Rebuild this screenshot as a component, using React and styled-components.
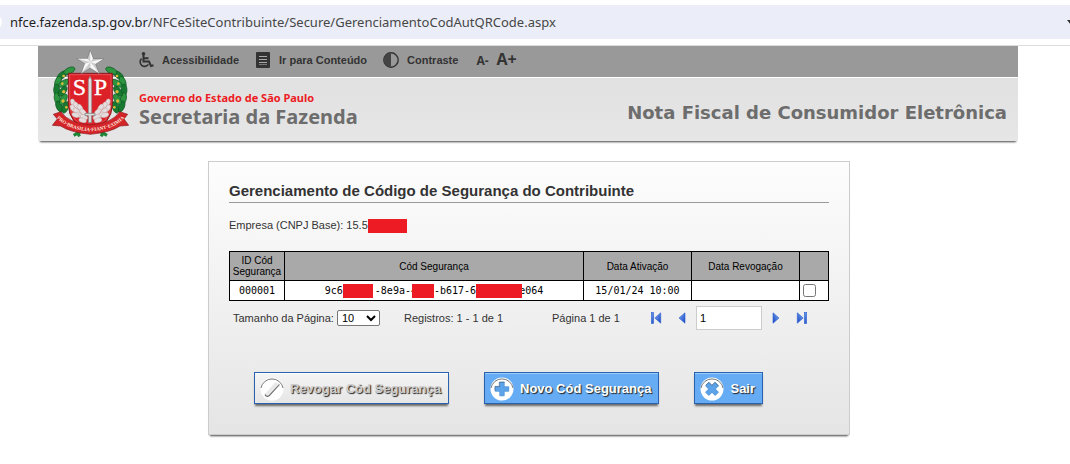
import React from "react";
import styled, { createGlobalStyle } from "styled-components";

const GlobalStyle = createGlobalStyle`
  * { box-sizing: border-box; }
  body {
    margin: 0;
    background: #fff;
    color: #333;
    font-family: "Liberation Sans", Arial, sans-serif;
    font-size: 11px;
    line-height: 16px;
  }
  button, input, select { font-family: inherit; }
`;

const AddressStrip = styled.div`
  padding: 5px 0 6px;
  border-bottom: 1px solid #dcdcdc;
`;

const AddressBar = styled.div`
  display: flex;
  align-items: center;
  height: 34px;
  overflow: hidden;
  background: #ebeef8;
`;

const SiteBadge = styled.span`
  flex: none;
  width: 16px;
  height: 16px;
  margin-left: -14px;
  margin-right: 8px;
  border-radius: 50%;
  background: #fff;
`;

const Address = styled.span`
  flex: 1;
  color: #474747;
  font-family: "Noto Sans", "Open Sans", sans-serif;
  font-size: 13px;
  white-space: nowrap;
`;

const Host = styled.span`
  color: #1f1f1f;
`;

const BarCaret = styled.svg`
  flex: none;
  width: 8px;
  height: 5px;
  margin-right: -5px;
`;

const Page = styled.div`
  padding-right: 14px;
`;

const Header = styled.header`
  display: grid;
  grid-template-columns: 101px 1fr;
  max-width: 980px;
  margin: 0 auto;
  box-shadow: 0 3px 2px -2px #444;
`;

const Emblem = styled.svg`
  grid-area: 1 / 1 / 3 / 2;
  z-index: 1;
  width: 77px;
  height: 87px;
  margin: 4px 0 0 14px;
`;

const AccessNav = styled.nav`
  grid-area: 1 / 1 / 2 / 3;
  display: flex;
  align-items: center;
  gap: 16px;
  height: 32px;
  padding: 0 0 4px 100px;
  background: #999;
  border-bottom: 1px solid #fff;
`;

const AccessLink = styled.a`
  display: flex;
  align-items: center;
  gap: 8px;
  color: #333;
  font-weight: bold;
  text-decoration: none;
  white-space: nowrap;
  svg { width: 16px; height: 16px; }
`;

const SizeButtons = styled.span`
  display: flex;
  align-items: baseline;
  gap: 8px;
  padding-left: 2px;
`;

const SizeButton = styled.button`
  padding: 0;
  border: 0;
  background: none;
  color: #333;
  font-family: "Open Sans", sans-serif;
  font-weight: bold;
  font-size: ${(p) => (p.$large ? 16 : 12)}px;
  line-height: 18px;
`;

const Brand = styled.div`
  grid-area: 2 / 1 / 3 / 3;
  display: flex;
  align-items: center;
  justify-content: space-between;
  height: 63px;
  padding: 0 11px 0 101px;
  background: linear-gradient(#e1e1e1, #e6e6e6);
`;

const Agency = styled.div`
  font-family: "Noto Sans", "Open Sans", sans-serif;
  font-weight: bold;
  white-space: nowrap;
`;

const Government = styled.div`
  color: #ed1c24;
  font-size: 11px;
  line-height: 14px;
`;

const Department = styled.div`
  color: #6d6d6d;
  font-size: 20px;
  line-height: 24px;
`;

const SystemName = styled.h1`
  margin: 6px 0 0;
  color: #6d6d6d;
  font-family: "DejaVu Sans", Verdana, sans-serif;
  font-size: 18px;
  line-height: 24px;
  white-space: nowrap;
`;

const Content = styled.main`
  padding: 20px 0 28px 2px;
`;

const Card = styled.section`
  max-width: 642px;
  margin: 0 auto;
  padding: 20px 20px 30px;
  border: 1px solid #ccc;
  background: linear-gradient(#fdfdfd, #e5e5e5);
  box-shadow: 0 3px 2px -2px #444;
`;

const CardTitle = styled.h2`
  margin: 0 0 14px;
  padding-bottom: 2px;
  border-bottom: 1px solid #999;
  font-size: 15px;
  line-height: 18px;
`;

const Company = styled.p`
  margin: 0 0 18px;
  line-height: 16px;
`;

const Redaction = styled.span`
  display: inline-block;
  position: relative;
  width: ${(p) => p.$width}px;
  height: 14px;
  margin: 0 ${(p) => p.$end || 0}px 0 ${(p) => p.$start || 0}px;
  background: #ed1c24;
  vertical-align: middle;
`;

const CodeTable = styled.table`
  width: 100%;
  border-collapse: collapse;
  table-layout: fixed;
  color: #000;
`;

const Column = styled.col`
  width: ${(p) => p.$width};
`;

const HeadCell = styled.th`
  height: 29px;
  padding: 0;
  border: 1px solid #000;
  background: #a9a9a9;
  font-size: 10px;
  font-weight: normal;
  line-height: 11px;
`;

const Cell = styled.td`
  height: 20px;
  padding: 0;
  border: 1px solid #000;
  background: #fff;
  font-family: "DejaVu Sans Mono", monospace;
  font-size: 10px;
  line-height: 16px;
  text-align: center;
  white-space: nowrap;
`;

const RowCheck = styled.input`
  display: block;
  width: 13px;
  height: 13px;
  margin: 0 0 0 3px;
`;

const Pager = styled.div`
  display: grid;
  grid-template-columns: 171px 148px 92px auto;
  align-items: center;
  justify-content: start;
  padding: 5px 0 0 4px;
  white-space: nowrap;
`;

const SizeField = styled.label`
  display: flex;
  align-items: center;
  gap: 3px;
`;

const SizeSelect = styled.select`
  width: 43px;
  height: 16px;
  padding: 0;
  border: 1px solid #767676;
  border-radius: 2px;
  background: #fff;
  color: #000;
  font-size: 11px;
`;

const PageControls = styled.div`
  display: flex;
  align-items: center;
  gap: 2px;
`;

const PageButton = styled.button`
  display: grid;
  place-items: center;
  width: 24px;
  height: 24px;
  padding: 0;
  border: 0;
  background: none;
`;

const PageInput = styled.input`
  width: 66px;
  height: 24px;
  padding: 1px 3px;
  border: 1px solid #ccc;
  background: #fff;
  color: #000;
  font-size: 11px;
`;

const Actions = styled.div`
  display: flex;
  gap: 35px;
  padding: 42px 0 0 25px;
`;

const ActionButton = styled.button`
  display: flex;
  align-items: center;
  gap: 6px;
  height: 32px;
  padding: 2px 7px 0 5px;
  border: 1px solid #2a62ad;
  background: ${(p) => (p.disabled ? "linear-gradient(#f4f4f4, #e6e6e6)" : "#66acf4")};
  box-shadow: 0 3px 2px -1px #666, inset 0 1px 0 ${(p) => (p.disabled ? "#fff" : "#9ccbf8")};
  color: ${(p) => (p.disabled ? "#ccc" : "#fff")};
  font-size: 13px;
  font-weight: bold;
  line-height: 16px;
  text-shadow: 1px 1px 1px #222;
  white-space: nowrap;
  svg { width: 24px; height: 24px; }
`;

const leaves = [
  [62, 88, 50], [50, 108, 20], [46, 132, 0], [48, 158, -12], [54, 182, -25],
  [68, 112, 60], [64, 136, 40], [66, 160, 30], [72, 184, 20], [84, 74, 65],
];

function LaurelSide() {
  return (
    <g>
      {leaves.map(([x, y, turn], i) => (
        <ellipse key={i} cx={x + 3} cy={y + 6} rx="9" ry="18" fill={i % 2 ? "#2d9440" : "#187a30"}
          stroke="#0c5520" strokeWidth="2" transform={`rotate(${turn} ${x + 3} ${y + 6})`} />
      ))}
      <g fill="#dfb83c">
        <circle cx="70" cy="96" r="4" /><circle cx="66" cy="119" r="4" />
        <circle cx="70" cy="143" r="5" /><circle cx="68" cy="171" r="5" />
        <circle cx="78" cy="190" r="4" />
      </g>
    </g>
  );
}

function WheatSide() {
  return (
    <g fill="#e4dede" stroke="#b98a8a" strokeWidth="1">
      {[[98, 176, -20], [108, 184, -35], [98, 193, -35], [109, 201, -50], [119, 191, -35],
        [117, 213, -60], [128, 204, -45], [131, 219, -65], [106, 213, -70], [127, 229, -75]].map(([x, y, turn], i) => (
        <ellipse key={i} cx={x} cy={y} rx="7" ry="12" transform={`rotate(${turn} ${x} ${y})`} />
      ))}
    </g>
  );
}

function StateEmblem() {
  return (
    <Emblem viewBox="35 18 231 261" role="img" aria-label="Brasão do Estado de São Paulo">
      <path d="M100 274 L133 256 M168 256 L200 274 M108 262 L118 277 M192 262 L182 277" stroke="#1c8535" strokeWidth="9" fill="none" />
      <LaurelSide />
      <g transform="translate(300 0) scale(-1 1)"><LaurelSide /></g>
      <path d="M84 88 H216 V181 Q215 242 150 260 Q85 242 84 181 Z" fill="#dd2128" stroke="#871a1c" strokeWidth="3" />
      <path d="M88 92 H212 V180 Q211 236 150 254 Q89 236 88 180 Z" fill="none" stroke="#f4a9a9" strokeWidth="1" />
      <WheatSide />
      <g transform="translate(300 0) scale(-1 1)"><WheatSide /></g>
      <path d="M144 108 L149 97 L154 108 V210 H144 Z" fill="#ddd" stroke="#888" strokeWidth="2" />
      <path d="M134 208 H164 V215 H154 V236 H144 V215 H134 Z" fill="#d8d8d8" stroke="#777" strokeWidth="2" />
      <g fill="#fff" stroke="#fff" strokeWidth="1" fontFamily="Liberation Serif, serif" fontSize="72">
        <text x="97" y="154">S</text>
        <text x="160" y="154">P</text>
      </g>
      <path d="M39 211 L62 203 Q83 237 150 243 Q217 237 238 203 L262 211 L251 225 L265 244 L239 246 Q211 265 150 271 Q89 265 61 246 L36 244 L51 225 Z" fill="#d3242a" stroke="#8b1719" strokeWidth="2" />
      <path id="motto" d="M51 224 Q84 258 150 262 Q218 258 251 224" fill="none" />
      <text fill="#ffe9df" fontFamily="Liberation Serif, serif" fontWeight="bold" fontSize="15">
        <textPath href="#motto" startOffset="50%" textAnchor="middle">PRO·BRASILIA·FIANT·EXIMIA</textPath>
      </text>
      <path d="M149 19 L158 44 L190 44 L166 60 L177 89 L150 72 L123 89 L134 60 L109 44 L141 44 Z" fill="#ccc" stroke="#777" strokeWidth="2" />
      <path d="M149 20 L150 54 L158 44 Z M189 44 L150 54 L166 59 Z M176 87 L150 54 L150 71 Z M124 87 L150 54 L134 59 Z M110 44 L150 54 L141 44 Z" fill="#f7f7f7" />
    </Emblem>
  );
}

function WheelchairIcon() {
  return (
    <svg viewBox="0 0 16 16" fill="none" stroke="#333" strokeWidth="2">
      <circle cx="5.5" cy="1.8" r="1.8" fill="#333" stroke="none" />
      <path d="M5.5 3 V9.5 H11 L13 14 L15.5 13.2 M6 6.2 H10.5" />
      <path d="M3.6 6.6 A4.5 4.5 0 1 0 10.4 12.4" strokeWidth="1.6" />
    </svg>
  );
}

function ContentIcon() {
  return (
    <svg viewBox="0 0 16 16">
      <rect x="1" y="0" width="14" height="16" rx="1" fill="#333" />
      <path d="M4 4.5 H12 M4 7.5 H12 M4 10.5 H12" stroke="#aaa" strokeWidth="1" />
      <path d="M4 12.5 H12" stroke="#777" strokeWidth="1" />
    </svg>
  );
}

function ContrastIcon() {
  return (
    <svg viewBox="0 0 16 16">
      <circle cx="8" cy="8" r="7.2" fill="none" stroke="#333" strokeWidth="1.4" />
      <path d="M8 1 A7 7 0 0 0 8 15 Z" fill="#444" />
    </svg>
  );
}

function PagerIcon({ edge, forward }) {
  return (
    <svg width="12" height="12" viewBox="0 0 12 12">
      <defs>
        <linearGradient id="pagerBlue" x1="0" y1="0" x2="1" y2="1">
          <stop offset="0" stopColor="#82b4f5" />
          <stop offset="1" stopColor="#1440c0" />
        </linearGradient>
      </defs>
      <g transform={forward ? "translate(12 0) scale(-1 1)" : undefined} fill="url(#pagerBlue)" stroke="#2a60d0" strokeWidth="0.6">
        {edge && <rect x="1.3" y="0.5" width="2.2" height="11" />}
        <path d={edge ? "M10.7 0.8 V11.2 L4.8 6 Z" : "M9 0.8 V11.2 L3 6 Z"} />
      </g>
    </svg>
  );
}

function ButtonIcon({ kind }) {
  return (
    <svg viewBox="0 0 24 24">
      <circle cx="12" cy="12" r="11.5" fill="#fff" />
      <path d="M1 11 A11.2 11.2 0 0 1 23 11" fill="none" stroke="#555" strokeWidth="1" opacity="0.8" />
      {kind === "check" && (
        <>
          <path d="M5 17 L15 5.5 Q18 5 19.5 8 L9 19.5 Q6 20 5 17 Z" fill="#e9e9e9" />
          <path d="M5 17.5 Q6.5 20.5 9 18.8 L19.5 7.5" fill="none" stroke="#666" strokeWidth="1.1" />
        </>
      )}
      {kind !== "check" && (
        <g transform={kind === "close" ? "rotate(45 12 12)" : undefined}>
          <path d="M10 5.5 H14 V10 H18.5 V14 H14 V18.5 H10 V14 H5.5 V10 H10 Z" fill="#5ca4ec" stroke="#5c9ee0" strokeWidth="1.4" strokeLinejoin="round" />
          <path d="M9.3 9.5 V5.2 H14.6 M5 13.5 V9.4 H9.5" fill="none" stroke="#47688c" strokeWidth="0.7" />
        </g>
      )}
    </svg>
  );
}

export default function App() {
  return (
    <>
      <GlobalStyle />
      <AddressStrip>
        <AddressBar>
          <SiteBadge />
          <Address>
            <Host>nfce.fazenda.sp.gov.br</Host>/NFCeSiteContribuinte/Secure/GerenciamentoCodAutQRCode.aspx
          </Address>
          <BarCaret viewBox="0 0 8 5"><path d="M0 0 H8 L4 5 Z" fill="#333" /></BarCaret>
        </AddressBar>
      </AddressStrip>
      <Page>
        <Header>
          <StateEmblem />
          <AccessNav>
            <AccessLink href="#acessibilidade"><WheelchairIcon />Acessibilidade</AccessLink>
            <AccessLink href="#conteudo"><ContentIcon />Ir para Conteúdo</AccessLink>
            <AccessLink href="#contraste"><ContrastIcon />Contraste</AccessLink>
            <SizeButtons>
              <SizeButton type="button">A-</SizeButton>
              <SizeButton type="button" $large>A+</SizeButton>
            </SizeButtons>
          </AccessNav>
          <Brand>
            <Agency>
              <Government>Governo do Estado de São Paulo</Government>
              <Department>Secretaria da Fazenda</Department>
            </Agency>
            <SystemName>Nota Fiscal de Consumidor Eletrônica</SystemName>
          </Brand>
        </Header>
        <Content id="conteudo">
          <Card>
            <CardTitle>Gerenciamento de Código de Segurança do Contribuinte</CardTitle>
            <Company>Empresa (CNPJ Base): 15.5<Redaction $width={39} /></Company>
            <CodeTable>
              <colgroup>
                <Column $width="55px" />
                <Column />
                <Column $width="108px" />
                <Column $width="108px" />
                <Column $width="29px" />
              </colgroup>
              <thead>
                <tr>
                  <HeadCell>ID Cód Segurança</HeadCell>
                  <HeadCell>Cód Segurança</HeadCell>
                  <HeadCell>Data Ativação</HeadCell>
                  <HeadCell>Data Revogação</HeadCell>
                  <HeadCell />
                </tr>
              </thead>
              <tbody>
                <tr>
                  <Cell>000001</Cell>
                  <Cell>
                    9c6<Redaction $width={30} $end={2} />-8e9a-4<Redaction $width={22} $start={-5} />-b617-6
                    <Redaction $width={46} $end={-3} />e064
                  </Cell>
                  <Cell>15/01/24 10:00</Cell>
                  <Cell />
                  <Cell><RowCheck type="checkbox" aria-label="Selecionar código 000001" /></Cell>
                </tr>
              </tbody>
            </CodeTable>
            <Pager>
              <SizeField>
                Tamanho da Página:
                <SizeSelect defaultValue="10"><option>10</option><option>20</option><option>50</option></SizeSelect>
              </SizeField>
              <span>Registros: 1 - 1 de 1</span>
              <span>Página 1 de 1</span>
              <PageControls>
                <PageButton type="button" aria-label="Primeira página"><PagerIcon edge /></PageButton>
                <PageButton type="button" aria-label="Página anterior"><PagerIcon /></PageButton>
                <PageInput type="text" defaultValue="1" aria-label="Página" />
                <PageButton type="button" aria-label="Próxima página"><PagerIcon forward /></PageButton>
                <PageButton type="button" aria-label="Última página"><PagerIcon edge forward /></PageButton>
              </PageControls>
            </Pager>
            <Actions>
              <ActionButton type="button" disabled><ButtonIcon kind="check" />Revogar Cód Segurança</ActionButton>
              <ActionButton type="button"><ButtonIcon kind="plus" />Novo Cód Segurança</ActionButton>
              <ActionButton type="button"><ButtonIcon kind="close" />Sair</ActionButton>
            </Actions>
          </Card>
        </Content>
      </Page>
    </>
  );
}
